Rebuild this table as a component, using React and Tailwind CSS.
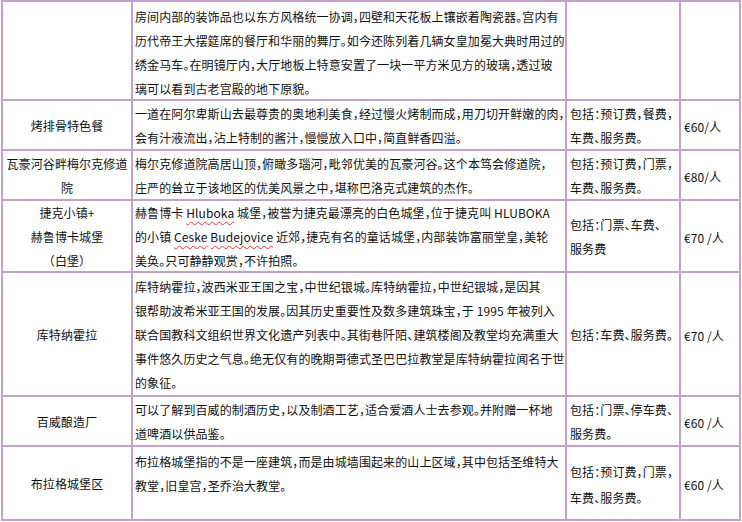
import React from "react";

const Wavy = ({ children }) => (
  <span className="underline decoration-wavy decoration-red-500 decoration-1 underline-offset-[3px]">
    {children}
  </span>
);

const rows = [
  {
    name: [],
    desc: [
      "房间内部的装饰品也以东方风格统一协调，四壁和天花板上镶嵌着陶瓷器。宫内有",
      "历代帝王大摆筵席的餐厅和华丽的舞厅。如今还陈列着几辆女皇加冕大典时用过的",
      "绣金马车。在明镜厅内，大厅地板上特意安置了一块一平方米见方的玻璃，透过玻",
      "璃可以看到古老宫殿的地下原貌。",
    ],
    descTop: true,
    inc: [],
    price: "",
  },
  {
    name: ["烤排骨特色餐"],
    desc: [
      "一道在阿尔卑斯山去最尊贵的奥地利美食，经过慢火烤制而成，用刀切开鲜嫩的肉，",
      "会有汁液流出，沾上特制的酱汁，慢慢放入口中，简直鲜香四溢。",
    ],
    inc: ["包括：预订费，餐费，", "车费、服务费。"],
    price: "€60/人",
  },
  {
    name: ["瓦豪河谷畔梅尔克修道", "院"],
    desc: [
      "梅尔克修道院高居山顶，俯瞰多瑙河，毗邻优美的瓦豪河谷。这个本笃会修道院，",
      "庄严的耸立于该地区的优美风景之中，堪称巴洛克式建筑的杰作。",
    ],
    inc: ["包括：预订费，门票，", "车费、服务费。"],
    price: "€80/人",
  },
  {
    name: ["捷克小镇+", "赫鲁博卡城堡", "（白堡）"],
    desc: [
      <>
        赫鲁博卡 <Wavy>Hluboka</Wavy> 城堡，被誉为捷克最漂亮的白色城堡，位于捷克叫 HLUBOKA
      </>,
      <>
        的小镇 <Wavy>Ceske</Wavy> <Wavy>Budejovice</Wavy> 近郊，捷克有名的童话城堡，内部装饰富丽堂皇，美轮
      </>,
      "美奂。只可静静观赏，不许拍照。",
    ],
    inc: ["包括：门票、车费、", "服务费"],
    price: "€70 /人",
  },
  {
    name: ["库特纳霍拉"],
    desc: [
      "库特纳霍拉，波西米亚王国之宝，中世纪银城。库特纳霍拉，中世纪银城，是因其",
      "银帮助波希米亚王国的发展。因其历史重要性及数多建筑珠宝，于 1995 年被列入",
      "联合国教科文组织世界文化遗产列表中。其街巷阡陌、建筑楼阁及教堂均充满重大",
      "事件悠久历史之气息。绝无仅有的晚期哥德式圣巴巴拉教堂是库特纳霍拉闻名于世",
      "的象征。",
    ],
    inc: ["包括：车费、服务费。"],
    price: "€70 /人",
  },
  {
    name: ["百威酿造厂"],
    desc: [
      "可以了解到百威的制酒历史，以及制酒工艺，适合爱酒人士去参观。并附赠一杯地",
      "道啤酒以供品鉴。",
    ],
    inc: ["包括：门票、停车费、", "服务费。"],
    price: "€60 /人",
  },
  {
    name: ["布拉格城堡区"],
    desc: [
      "布拉格城堡指的不是一座建筑，而是由城墙围起来的山上区域，其中包括圣维特大",
      "教堂，旧皇宫，圣乔治大教堂。",
    ],
    descTop: true,
    inc: ["包括：预订费，门票，", "车费、服务费。"],
    incLoose: true,
    price: "€60 /人",
  },
];

export default function App() {
  return (
    <div className="w-[742px] h-[522px] bg-white overflow-hidden">
      <div className="ml-px w-[740px] grid grid-cols-[128px_432px_112px_58px] grid-rows-[97px_48px_48px_70px_122px_48px_72px] gap-[2px] p-[2px] bg-[#c4a1c9] text-[12px] leading-[24px] tracking-[0.1px] text-[#111] font-['Noto_Sans_CJK_SC','Noto_Sans',sans-serif] [font-feature-settings:'halt']">
        {rows.map((r, i) => (
          <React.Fragment key={i}>
            <div className="bg-white flex flex-col items-center justify-center text-center pt-[2px]">
              {r.name.map((l, j) => (
                <div key={j} className="whitespace-nowrap">
                  {l}
                </div>
              ))}
            </div>
            <div
              className={
                r.descTop
                  ? "bg-white flex flex-col justify-start pl-[2px] pt-[3px]"
                  : "bg-white flex flex-col justify-center pl-[2px] pt-[2px]"
              }
            >
              {r.desc.map((l, j) => (
                <div key={j} className="whitespace-nowrap">
                  {l}
                </div>
              ))}
            </div>
            <div
              className={
                r.incLoose
                  ? "bg-white flex flex-col justify-center pl-[3px] pt-[4px] leading-[26px]"
                  : "bg-white flex flex-col justify-center pl-[3px] pt-[2px]"
              }
            >
              {r.inc.map((l, j) => (
                <div key={j} className="whitespace-nowrap">
                  {l}
                </div>
              ))}
            </div>
            <div className="bg-white flex flex-col justify-center pl-[3px] pt-[3px] whitespace-nowrap">
              {r.price}
            </div>
          </React.Fragment>
        ))}
      </div>
    </div>
  );
}
